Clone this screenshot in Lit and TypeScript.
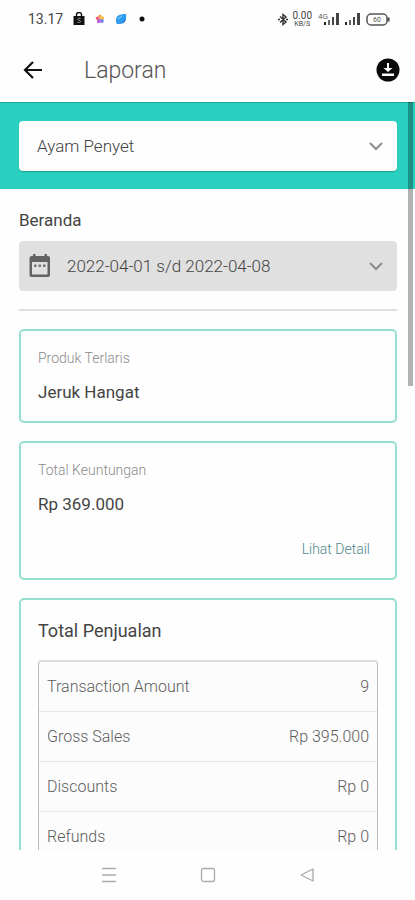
import { LitElement, html, css, svg } from "lit";
import { customElement, property, state } from "lit/decorators.js";

const chevron = html`<svg class="chevron" width="16" height="16" viewBox="0 0 16 16" aria-hidden="true">
  <path d="M2 5l6 6 6-6" fill="none" stroke="#8c8c8c" stroke-width="2" />
</svg>`;

@customElement("status-bar")
export class StatusBar extends LitElement {
  static styles = css`
    :host {
      display: flex;
      flex: none;
      align-items: center;
      justify-content: space-between;
      height: 38px;
      padding: 0 25px 0 28px;
      color: #444;
      font-size: 14px;
    }
    .group {
      display: flex;
      align-items: center;
    }
    .left {
      gap: 10px;
    }
    .right {
      gap: 5px;
    }
    .rate {
      display: flex;
      flex-direction: column;
      align-items: center;
      font-size: 10px;
      line-height: 9px;
    }
    .rate small {
      font-size: 7px;
      line-height: 8px;
    }
  `;

  private bars(tag: string) {
    return html`<svg width="${tag ? 23 : 16}" height="14" viewBox="${tag ? "0 0 23 14" : "7 0 16 14"}" aria-hidden="true">
      ${tag ? svg`<text x="1" y="7" font-size="8" fill="#666">${tag}</text>` : null}
      <rect x="7" y="10" width="2" height="3" fill="#222" />
      <rect x="11" y="8" width="2" height="5" fill="#666" />
      <rect x="15" y="5" width="2" height="8" fill="#444" />
      <rect x="19" y="1" width="3" height="12" fill="#444" />
    </svg>`;
  }

  render() {
    return html`
      <div class="group left">
        <span>13.17</span>
        <svg width="12" height="14" viewBox="0 0 12 14" aria-hidden="true">
          <path d="M3.500 4V2.500a2.500 2 0 0 1 5 0V4" fill="none" stroke="#111" stroke-width="1.400" />
          <path d="M.5 4h11v9H.5z" fill="#111" />
          <path d="M7.600 6.600C6 5.600 4.500 6.400 4.800 7.400c.3 1 2.700.7 2.700 2.100 0 1.200-2 1.300-3.100.4" fill="none" stroke="#999" />
        </svg>
        <svg width="10" height="10" viewBox="0 0 10 10" aria-hidden="true">
          <path d="M5 5L3.200 1.600 5 .5l1.500 1.300z" fill="#f6a13c" />
          <path d="M5 5l1.500-3.200 3 1.400-.8 2.300z" fill="#f7c64b" />
          <path d="M5 5l3.700.5-.5 3.500-2.400-.5z" fill="#6e7be8" />
          <path d="M5 5l.8 3.500L2.500 9.200 2 6.500z" fill="#b45ae0" />
          <path d="M5 5L2 6.500.5 3.500l2.700-1.200z" fill="#ee5a6f" />
        </svg>
        <svg width="12" height="12" viewBox="0 0 12 12" aria-hidden="true">
          <path d="M1 7C1 3 4 1 11 1c.5 3 0 5-1 7-1 2-4 3-8 3-1-1-1-2-1-4z" fill="#2f9cf0" />
          <path d="M2 11l5-1 4-5c0 5-4 6-9 6z" fill="#1b6fd8" />
          <path d="M3 6l4-3" stroke="#8fd2ff" />
        </svg>
        <svg width="10" height="6" viewBox="0 0 10 6" aria-hidden="true"><circle cx="5" cy="3" r="2.500" fill="#111" /></svg>
      </div>
      <div class="group right">
        <svg width="10" height="13" viewBox="0 0 10 13" aria-hidden="true">
          <path d="M2 3.500l6 5.500-3 2.500v-10L8 4 2 9.500M0 6.500h2M8 6.500h2" fill="none" stroke="#333" stroke-width="1.400" />
        </svg>
        <span class="rate"><span>0.00</span><small>KB/S</small></span>
        ${this.bars("4G")} ${this.bars("")}
        <svg width="24" height="13" viewBox="0 0 24 13" aria-hidden="true">
          <rect x="1" y="1" width="20" height="11" rx="4" fill="none" stroke="#555" stroke-width="1.500" />
          <path d="M22.500 4.500v4" stroke="#444" stroke-width="2" />
          <text x="11" y="9" font-size="7" text-anchor="middle" fill="#555">60</text>
        </svg>
      </div>
    `;
  }
}

@customElement("report-card")
export class ReportCard extends LitElement {
  @property() label = "";
  @property() value = "";
  @property() action = "";

  static styles = css`
    :host {
      display: flex;
      flex-direction: column;
      padding: 17px;
      border: 2px solid #95dfd0;
      border-radius: 5px;
    }
    .label {
      margin: 0;
      font-size: 14px;
      line-height: 20px;
      font-weight: 300;
      color: #8a8a8a;
    }
    .value {
      margin: 12px 0 0;
      font-size: 17px;
      line-height: 24px;
      color: #444;
    }
    .action {
      align-self: flex-end;
      margin: 23px 8px 2px 0;
      font-size: 14px;
      line-height: 20px;
      font-weight: 300;
      color: #4f888c;
      text-decoration: none;
    }
  `;

  render() {
    return html`
      <p class="label">${this.label}</p>
      <p class="value">${this.value}</p>
      ${this.action ? html`<a class="action" href="#detail">${this.action}</a>` : null}
    `;
  }
}

@customElement("app-root")
export class AppRoot extends LitElement {
  @state() private sales = [
    ["Transaction Amount", "9"],
    ["Gross Sales", "Rp 395.000"],
    ["Discounts", "Rp 0"],
    ["Refunds", "Rp 0"],
  ];

  static styles = css`
    :host {
      display: flex;
      flex-direction: column;
      height: 100vh;
      background: #fefefe;
      font-family: Roboto, "Liberation Sans", sans-serif;
      color: #444;
    }
    button {
      padding: 0;
      border: 0;
      background: none;
      font: inherit;
      color: inherit;
    }
    svg {
      display: block;
    }
    .bar {
      display: flex;
      flex: none;
      align-items: center;
      height: 64px;
      padding: 0 15px 0 21px;
    }
    .title {
      flex: 1;
      margin: 0 0 0 39px;
      font-size: 23px;
      font-weight: 300;
      color: #555;
    }
    .page {
      position: relative;
      flex: 1;
      min-height: 0;
      overflow: hidden;
    }
    .thumb {
      position: absolute;
      top: 0;
      right: 2px;
      width: 5px;
      height: 38%;
      background: rgba(0, 0, 0, 0.3);
    }
    .outlet {
      padding: 18px 18px 18px 19px;
      background: #2ad0bf;
      border-top: 1px solid #14ab9d;
      box-sizing: border-box;
    }
    .field {
      display: grid;
      align-items: center;
    }
    .field > * {
      grid-area: 1 / 1;
    }
    .field .chevron {
      justify-self: end;
      margin-right: 13px;
      pointer-events: none;
    }
    .select {
      width: 100%;
      height: 50px;
      padding: 0 18px;
      appearance: none;
      border: 0;
      border-radius: 4px;
      background: #fdfdfd;
      box-shadow: 0 1px 1px rgba(0, 0, 0, 0.25);
      font: inherit;
      font-size: 17px;
      font-weight: 300;
      color: #444;
    }
    .body {
      display: flex;
      flex-direction: column;
      gap: 18px;
      padding: 18px 18px 18px 19px;
    }
    .heading {
      margin: 0 0 8px;
      font-size: 17px;
      line-height: 26px;
      font-weight: 400;
    }
    .date {
      display: flex;
      align-items: center;
      width: 100%;
      height: 50px;
      padding: 0 13px 0 9px;
      border-radius: 4px;
      background: #e0e0e0;
      font-size: 17px;
      font-weight: 300;
      color: #444;
    }
    .range {
      flex: 1;
      margin-left: 15px;
      text-align: left;
    }
    .rule {
      width: 100%;
      height: 2px;
      margin: 0;
      border: 0;
      background: #dedede;
    }
    .panel {
      padding: 18px 17px;
      border: 2px solid #95dfd0;
      border-radius: 5px;
    }
    .subtitle {
      margin: 0 0 16px;
      font-size: 18px;
      line-height: 26px;
      font-weight: 400;
    }
    .sales {
      width: 100%;
      border: 1px solid #bbb;
      border-top: 2px solid #ddd;
      border-radius: 4px;
      border-spacing: 0;
      background: #fcfcfc;
      font-size: 16px;
      color: #5c5c5c;
    }
    .sales th,
    .sales td {
      height: 49px;
      padding: 0 8px;
      border-bottom: 1px solid #e6e6e6;
      font-weight: 300;
      text-align: left;
    }
    .sales td {
      text-align: right;
    }
    .nav {
      display: flex;
      flex: none;
      align-items: center;
      justify-content: center;
      gap: 83px;
      height: 50px;
    }
  `;

  render() {
    return html`
      <status-bar></status-bar>
      <header class="bar">
        <button aria-label="Kembali">
          <svg width="24" height="24" viewBox="0 0 24 24">
            <path d="M12 4L4 12l8 8M4 12h17" fill="none" stroke="#111" stroke-width="2.200" />
          </svg>
        </button>
        <h1 class="title">Laporan</h1>
        <button aria-label="Unduh">
          <svg width="24" height="24" viewBox="0 0 24 24">
            <circle cx="12" cy="12" r="11.500" fill="#0a0a0a" />
            <path d="M11 5h2v5h3.500L12 14 7.500 10H11z" fill="#fff" />
            <path d="M6 15.500h12v2.500H6z" fill="#fff" />
          </svg>
        </button>
      </header>
      <main class="page">
        <div class="outlet">
          <div class="field">
            <select class="select" aria-label="Outlet">
              <option>Ayam Penyet</option>
            </select>
            ${chevron}
          </div>
        </div>
        <div class="body">
          <section>
            <h2 class="heading">Beranda</h2>
            <button class="date">
              <svg width="24" height="26" viewBox="0 0 24 26" aria-hidden="true">
                <path
                  fill="#636363"
                  fill-rule="evenodd"
                  d="M5 1h2.500v2h9V1H19v2h1a2 2 0 0 1 2 2v17a2 2 0 0 1-2 2H3.500a2 2 0 0 1-2-2V5a2 2 0 0 1 2-2H5zM4 9v12.500h15.500V9z"
                />
                <path fill="#777" d="M6 11.500h2.500V14H6zM10.500 11.500H13V14h-2.500zM15 11.500h2.500V14H15z" />
              </svg>
              <span class="range">2022-04-01 s/d 2022-04-08</span>
              ${chevron}
            </button>
          </section>
          <hr class="rule" />
          <report-card label="Produk Terlaris" value="Jeruk Hangat"></report-card>
          <report-card label="Total Keuntungan" value="Rp 369.000" action="Lihat Detail"></report-card>
          <section class="panel">
            <h2 class="subtitle">Total Penjualan</h2>
            <table class="sales">
              <tbody>
                ${this.sales.map(
                  ([name, amount]) => html`<tr>
                    <th scope="row">${name}</th>
                    <td>${amount}</td>
                  </tr>`
                )}
              </tbody>
            </table>
          </section>
        </div>
        <div class="thumb"></div>
      </main>
      <nav class="nav">
        <button aria-label="Menu">
          <svg width="16" height="16" viewBox="0 0 16 16">
            <path d="M1 1.500h14M1 8h14M1 14.500h14" stroke="#aaa" stroke-width="1.500" />
          </svg>
        </button>
        <button aria-label="Home">
          <svg width="16" height="16" viewBox="0 0 16 16">
            <rect x="1.500" y="1.500" width="13" height="13" rx="2" fill="none" stroke="#aaa" stroke-width="1.300" />
          </svg>
        </button>
        <button aria-label="Back">
          <svg width="16" height="16" viewBox="0 0 16 16">
            <path d="M14 2v12L2 8z" fill="none" stroke="#aaa" stroke-width="1.300" stroke-linejoin="round" />
          </svg>
        </button>
      </nav>
    `;
  }
}
